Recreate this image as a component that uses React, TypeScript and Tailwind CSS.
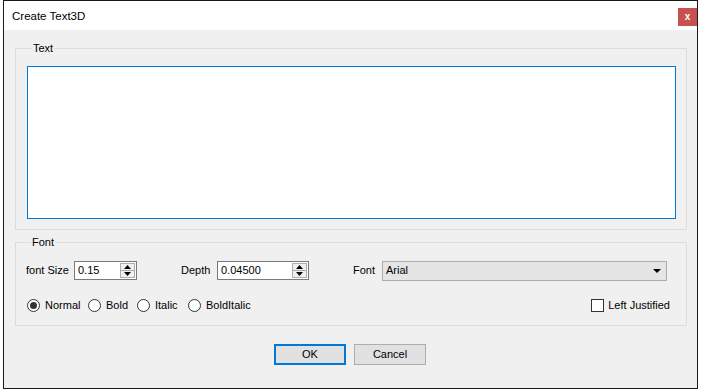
import { useState } from 'react'

function Spin({ value, width }: { value: string; width: string }) {
  return (
    <div className={`${width} h-[19px] flex items-stretch bg-white border border-[#7a7a7a]`}>
      <input
        defaultValue={value}
        className="flex-1 min-w-0 pl-[3px] text-[11px] outline-none bg-transparent"
      />
      <div className="w-[15px] my-[1px] mr-[1px] flex flex-col border border-[#adadad] bg-[#f0f0f0]">
        <div className="flex-1 flex items-center justify-center border-b border-[#adadad]">
          <svg width="7" height="4" viewBox="0 0 7 4">
            <path d="M3.5 0L7 4H0z" fill="#000" />
          </svg>
        </div>
        <div className="flex-1 flex items-center justify-center">
          <svg width="7" height="4" viewBox="0 0 7 4">
            <path d="M0 0h7L3.5 4z" fill="#000" />
          </svg>
        </div>
      </div>
    </div>
  )
}

function Radio({ label, checked, width, onClick }: { label: string; checked: boolean; width: string; onClick: () => void }) {
  return (
    <button onClick={onClick} className={`${width} flex items-center gap-[5px]`}>
      <span className="w-[13px] h-[13px] shrink-0 rounded-full border border-[#333] bg-white flex items-center justify-center">
        {checked && <span className="w-[7px] h-[7px] rounded-full bg-[#333]" />}
      </span>
      <span>{label}</span>
    </button>
  )
}

const styles = [
  { label: 'Normal', width: 'w-[61px]' },
  { label: 'Bold', width: 'w-[49px]' },
  { label: 'Italic', width: 'w-[51px]' },
  { label: 'BoldItalic', width: 'w-[70px]' },
]

function App() {
  const [style, setStyle] = useState('Normal')
  const [left, setLeft] = useState(false)

  return (
    <div className="min-h-screen bg-white pl-[3px] text-[11px] text-black" style={{ fontFamily: '"Liberation Sans", Arial, sans-serif' }}>
      <div className="w-[695px] h-[389px] border border-[#1a1a1a] flex flex-col">
        <div className="h-[29px] bg-white flex justify-between">
          <span className="pl-[8px] pt-[8px] text-[11.5px] leading-[14px]">Create Text3D</span>
          <button className="mt-[7px] w-[19px] h-[18px] bg-[#c75050] text-white text-[10px] font-bold leading-none flex items-center justify-center">
            x
          </button>
        </div>

        <div className="flex-1 bg-[#f0f0f0] flex flex-col pt-[12px]">
          <fieldset className="ml-[11px] w-[672px] border border-[#dcdcdc] pl-[11px] pr-[10px] pb-[10px]">
            <legend className="ml-[5px] px-[1px] leading-[13px]">Text</legend>
            <textarea className="mt-[11px] block w-full h-[153px] resize-none bg-white border border-[#0078d7] outline-none" />
          </fieldset>

          <fieldset className="mt-[6px] ml-[11px] w-[672px] border border-[#dcdcdc] pl-[10px] pr-[19px] pb-[13px]">
            <legend className="ml-[5px] px-[1px] leading-[13px]">Font</legend>
            <div className="mt-[12px] h-[19px] flex items-center">
              <div className="w-[155px] flex items-center">
                <span className="w-[48px]">font Size</span>
                <Spin value="0.15" width="w-[63px]" />
              </div>
              <div className="w-[172px] flex items-center">
                <span className="w-[36px]">Depth</span>
                <Spin value="0.04500" width="w-[92px]" />
              </div>
              <div className="flex-1 flex items-center">
                <span className="w-[29px]">Font</span>
                <div className="flex-1 h-[20px] bg-[#e5e5e5] border border-[#adadad] flex items-center justify-between pl-[3px] pr-[5px]">
                  <span>Arial</span>
                  <svg width="8" height="4" viewBox="0 0 8 4">
                    <path d="M0 0h8L4 4z" fill="#000" />
                  </svg>
                </div>
              </div>
            </div>
            <div className="mt-[19px] h-[13px] flex items-center pl-[1px]">
              {styles.map((s) => (
                <Radio key={s.label} label={s.label} width={s.width} checked={style === s.label} onClick={() => setStyle(s.label)} />
              ))}
              <button onClick={() => setLeft(!left)} className="ml-auto mr-[-3px] flex items-center gap-[4px]">
                <span className="w-[13px] h-[13px] border border-[#333] bg-white flex items-center justify-center">
                  {left && (
                    <svg width="9" height="8" viewBox="0 0 9 8">
                      <path d="M1 4l2.5 2.5L8 1" stroke="#333" strokeWidth="1.5" fill="none" />
                    </svg>
                  )}
                </span>
                <span>Left Justified</span>
              </button>
            </div>
          </fieldset>

          <div className="mt-[18px] flex justify-center gap-[8px] pr-[1px]">
            <button className="w-[72px] h-[21px] bg-[#e1e1e1] border-2 border-[#0078d7]">OK</button>
            <button className="w-[72px] h-[21px] bg-[#e1e1e1] border border-[#adadad]">Cancel</button>
          </div>
        </div>
      </div>
    </div>
  )
}

export default App
